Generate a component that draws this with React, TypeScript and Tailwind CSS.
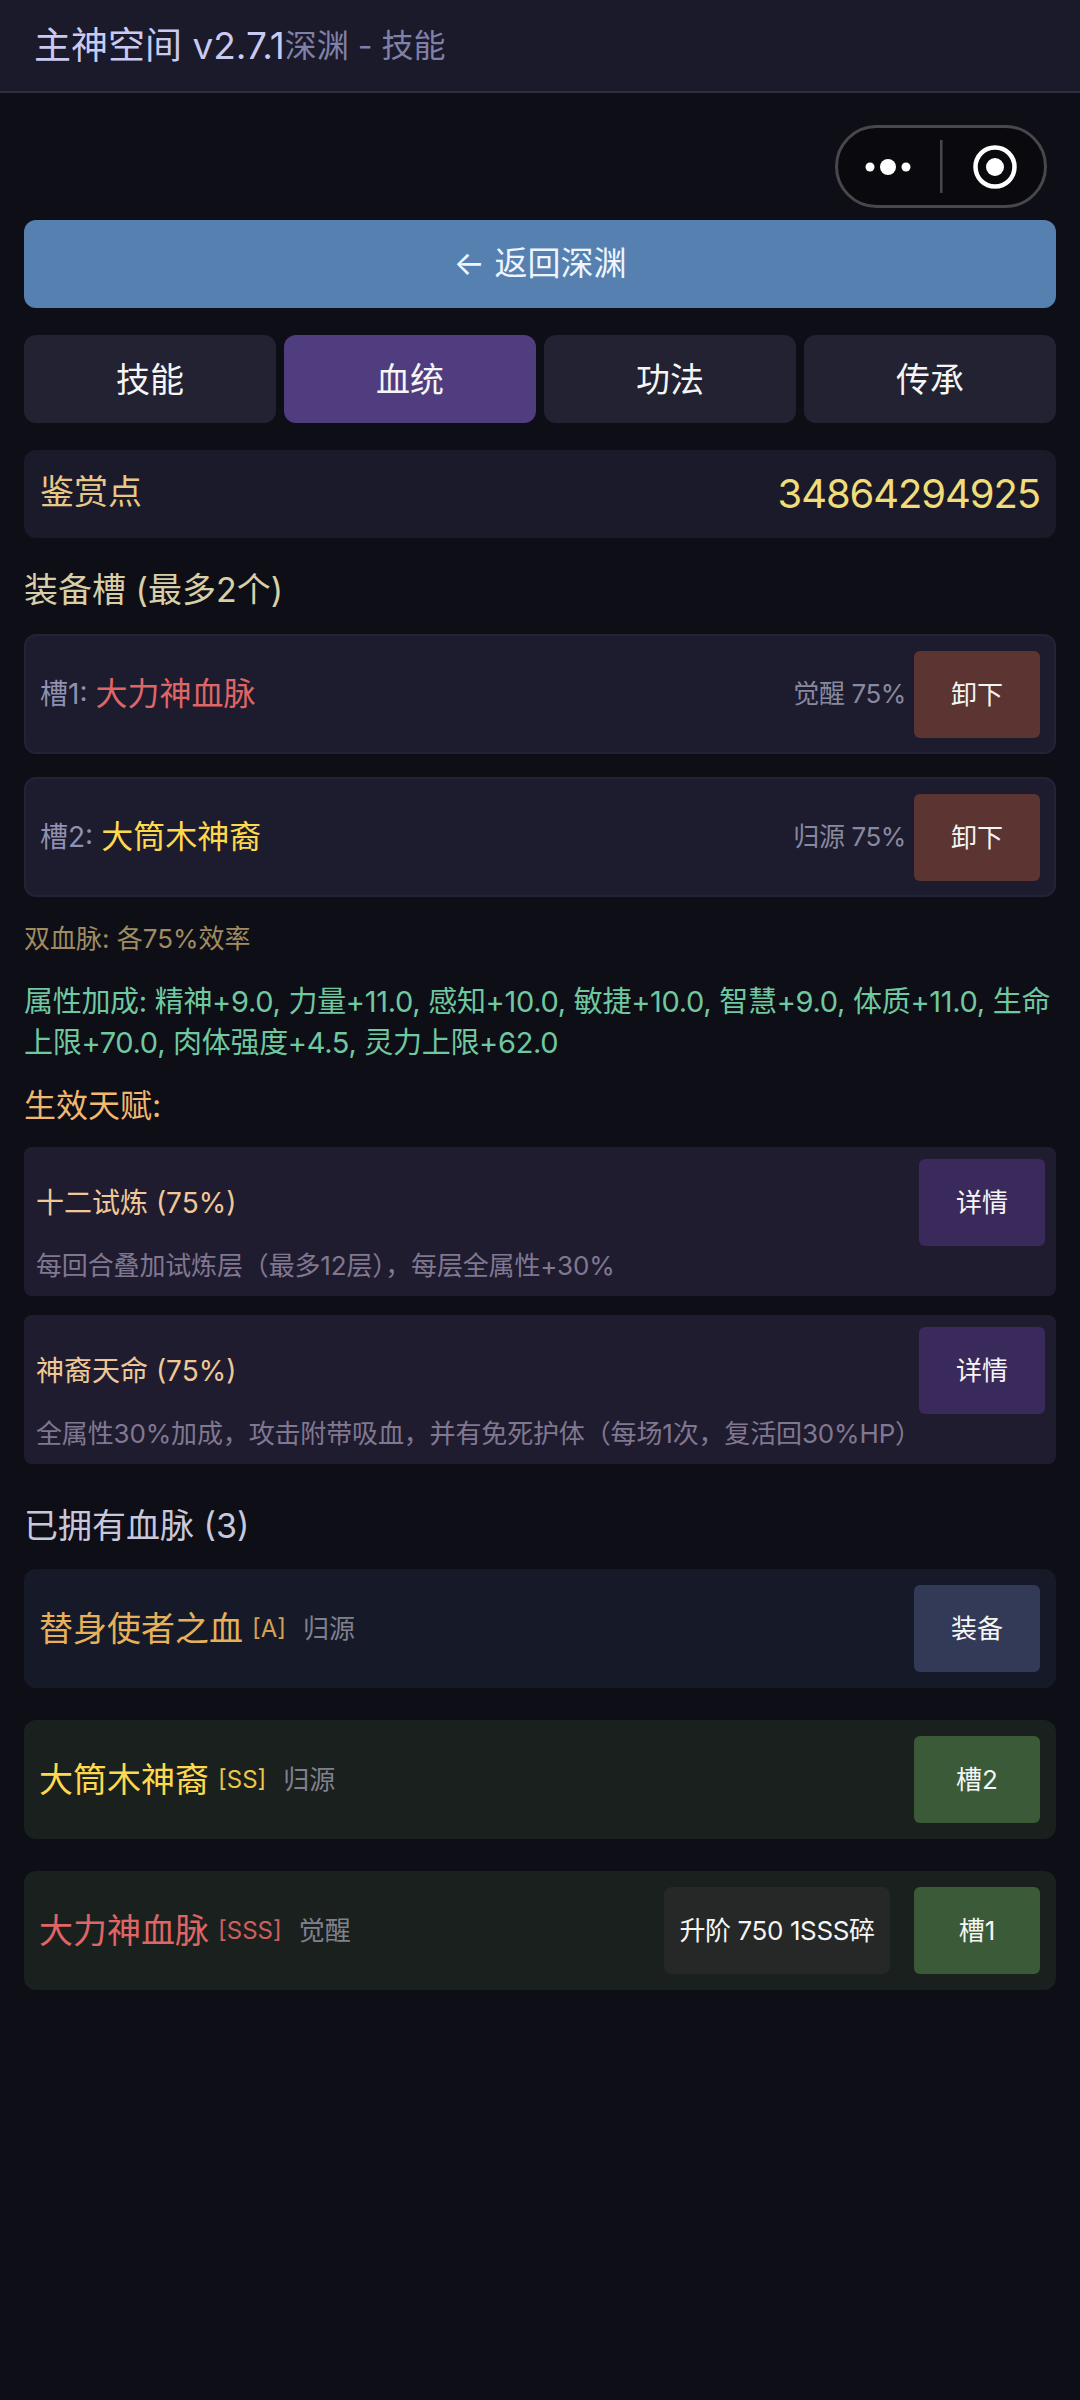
import React from "react";

const slots = [
  { label: "槽1:", name: "大力神血脉", nameColor: "text-[#e06666]", info: "觉醒 75%", mt: "mt-[25px]" },
  { label: "槽2:", name: "大筒木神裔", nameColor: "text-[#ffd94d]", info: "归源 75%", mt: "mt-[23px]" },
];

const talents = [
  { name: "十二试炼 (75%)", desc: "每回合叠加试炼层（最多12层），每层全属性+30%" },
  { name: "神裔天命 (75%)", desc: "全属性30%加成，攻击附带吸血，并有免死护体（每场1次，复活回30%HP）" },
];

function Capsule() {
  return (
    <div className="absolute left-[835px] top-[125px] flex h-[83px] w-[212px] items-center rounded-full border-[3px] border-[#47474c] bg-[#0a0a0e]">
      <svg width="206" height="77" viewBox="0 0 206 77" fill="none">
        <circle cx="32" cy="39" r="4.5" fill="#fff" />
        <circle cx="50" cy="39" r="8" fill="#fff" />
        <circle cx="68" cy="39" r="4.5" fill="#fff" />
        <rect x="102" y="12" width="2.5" height="53" fill="#47474c" />
        <circle cx="157" cy="39" r="19.5" stroke="#fff" strokeWidth="4.5" />
        <circle cx="157" cy="39" r="9" fill="#fff" />
      </svg>
    </div>
  );
}

function OwnedCard({
  name,
  grade,
  kind,
  color,
  bg,
  action,
  actionBg,
  upgrade,
}: {
  name: string;
  grade: string;
  kind: string;
  color: string;
  bg: string;
  action: string;
  actionBg: string;
  upgrade?: string;
}) {
  return (
    <div className={`flex h-[119px] items-center rounded-xl pl-[15px] pr-4 ${bg}`}>
      <span className={`text-[34px] leading-none ${color}`}>{name}</span>
      <span className={`ml-[9px] text-[24px] leading-none ${color} opacity-90`}>{grade}</span>
      <span className="ml-[17px] text-[26px] leading-none text-[#80808f]">{kind}</span>
      {upgrade && (
        <button className="ml-auto flex h-[87px] w-[226px] items-center justify-center rounded-lg bg-[#252827] text-[26px] tracking-[-0.4px] text-[#f5f5f5]">
          {upgrade}
        </button>
      )}
      <button
        className={`flex h-[87px] w-[126px] items-center justify-center rounded-md text-[26px] text-[#f5f5f5] ${actionBg} ${upgrade ? "ml-6" : "ml-auto"}`}
      >
        {action}
      </button>
    </div>
  );
}

export default function App() {
  return (
    <div className="relative min-h-[2400px] w-[1080px] bg-[#0e0e16] font-['Inter','Noto_Sans_CJK_SC',sans-serif] font-normal">
      {/* Header */}
      <header className="flex h-[93px] items-center border-b-2 border-[#2d2d3d] bg-[#1a1a2a] pl-[34px]">
        <span className="text-[37px] leading-none text-[#c9c9f2]">主神空间 v2.7.1</span>
        <span className="text-[32px] leading-none text-[#8080a8]">深渊 - 技能</span>
      </header>

      <Capsule />

      <main className="px-6 pt-[127px]">
        <button className="flex h-[88px] w-full items-center justify-center rounded-xl bg-[#5580b0] text-[33px] text-[#eef5ff]">
          ← 返回深渊
        </button>

        {/* Tabs */}
        <div className="mt-[27px] grid grid-cols-4 gap-2">
          {["技能", "血统", "功法", "传承"].map((tab) => (
            <button
              key={tab}
              className={`flex h-[88px] items-center justify-center rounded-xl text-[34px] text-[#f5f5f5] ${
                tab === "血统" ? "bg-[#4f3d80]" : "bg-[#222232]"
              }`}
            >
              {tab}
            </button>
          ))}
        </div>

        {/* Points */}
        <div className="mt-[27px] flex h-[88px] items-center justify-between rounded-xl bg-[#1a1a2a] px-4">
          <span className="-mt-1 text-[34px] leading-none text-[#e8c888]">鉴赏点</span>
          <span className="text-[40px] leading-none tracking-[-1.1px] text-[#f0dc78]">34864294925</span>
        </div>

        <h2 className="mt-[33px] text-[34px] font-normal leading-[38px] text-[#d8cfa8]">装备槽 (最多2个)</h2>

        {slots.map((slot) => (
          <div
            key={slot.label}
            className={`flex h-[120px] items-center rounded-xl border-2 border-[#232338] bg-[#1c1c2e] pl-[14px] pr-[14px] ${slot.mt}`}
          >
            <span className="text-[28px] leading-none text-[#9090b0]">{slot.label}</span>
            <span className={`ml-2 text-[32px] leading-none ${slot.nameColor}`}>{slot.name}</span>
            <span className="ml-auto mr-2 text-[26px] leading-none tracking-[-0.4px] text-[#88889f]">{slot.info}</span>
            <button className="flex h-[87px] w-[126px] items-center justify-center rounded-md bg-[#5c3533] text-[26px] text-[#f5f5f5]">
              卸下
            </button>
          </div>
        ))}

        <p className="mt-[26px] text-[26px] leading-8 text-[#a08c60]">双血脉: 各75%效率</p>

        <p className="mt-[26px] text-[29px] leading-[41px] tracking-[-0.3px] text-[#70c8a0]">
          属性加成: 精神+9.0, 力量+11.0, 感知+10.0, 敏捷+10.0, 智慧+9.0, 体质+11.0, 生命上限+70.0, 肉体强度+4.5, 灵力上限+62.0
        </p>

        <h3 className="mt-6 text-[32px] font-normal leading-[38px] text-[#f0b870]">生效天赋:</h3>

        {talents.map((talent, i) => (
          <div
            key={talent.name}
            className={`flex h-[149px] flex-col rounded-lg bg-[#201c30] pl-3 pr-[11px] pt-3 ${i === 0 ? "mt-[22px]" : "mt-[19px]"}`}
          >
            <div className="flex items-center justify-between">
              <span className="text-[28px] leading-none text-[#f0c898]">{talent.name}</span>
              <button className="flex h-[87px] w-[126px] items-center justify-center rounded-md bg-[#3a2a5c] text-[26px] text-[#f5f5f5]">
                详情
              </button>
            </div>
            <p className="mt-1 text-[26px] leading-8 tracking-[-0.15px] text-[#807890]">{talent.desc}</p>
          </div>
        ))}

        <h2 className="mt-[43px] text-[34px] font-normal leading-[38px] text-[#c8c8dc]">已拥有血脉 (3)</h2>

        <div className="mt-6 flex flex-col gap-8">
          <OwnedCard
            name="替身使者之血"
            grade="[A]"
            kind="归源"
            color="text-[#e8b058]"
            bg="bg-[#161a28]"
            action="装备"
            actionBg="bg-[#333a58]"
          />
          <OwnedCard
            name="大筒木神裔"
            grade="[SS]"
            kind="归源"
            color="text-[#ffd94d]"
            bg="bg-[#1a201e]"
            action="槽2"
            actionBg="bg-[#3a5a38]"
          />
          <OwnedCard
            name="大力神血脉"
            grade="[SSS]"
            kind="觉醒"
            color="text-[#e06666]"
            bg="bg-[#1a201e]"
            action="槽1"
            actionBg="bg-[#3a5a38]"
            upgrade="升阶 750 1SSS碎"
          />
        </div>
      </main>
    </div>
  );
}
